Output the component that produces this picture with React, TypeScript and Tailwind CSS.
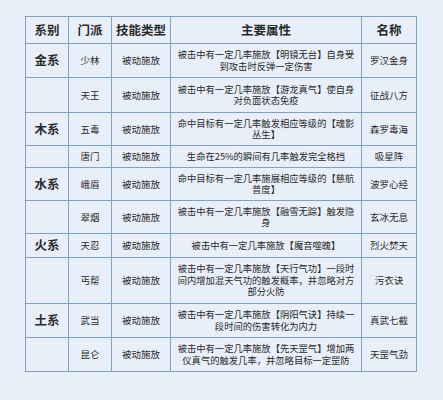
const rows = [
  { series: '金系', sect: '少林', attr: '被击中有一定几率施放【明镜无台】自身受到攻击时反弹一定伤害', name: '罗汉金身', h: 'h-[34px]' },
  { series: '', sect: '天王', attr: '被击中有一定几率施放【游龙真气】使自身对负面状态免疫', name: '征战八方', h: 'h-[35px]' },
  { series: '木系', sect: '五毒', attr: '命中目标有一定几率触发相应等级的【魂影丛生】', name: '森罗毒海', h: 'h-[33px]' },
  { series: '', sect: '唐门', attr: '生命在25%的瞬间有几率触发完全格挡', name: '吸星阵', h: 'h-[22px]' },
  { series: '水系', sect: '峨眉', attr: '命中目标有一定几率施展相应等级的【慈航普度】', name: '波罗心经', h: 'h-[33px]' },
  { series: '', sect: '翠烟', attr: '被击中有一定几率施放【融雪无踪】触发隐身', name: '玄冰无息', h: 'h-[33px]' },
  { series: '火系', sect: '天忍', attr: '被击中有一定几率施放【魔音噬魄】', name: '烈火焚天', h: 'h-[24px]' },
  { series: '', sect: '丐帮', attr: '被击中有一定几率施放【天行气功】一段时间内增加混天气功的触发概率，并忽略对方部分火防', name: '污衣诀', h: 'h-[46px]' },
  { series: '土系', sect: '武当', attr: '被击中有一定几率施放【阴阳气诀】持续一段时间的伤害转化为内力', name: '真武七截', h: 'h-[34px]' },
  { series: '', sect: '昆仑', attr: '被击中有一定几率施放【先天罡气】增加两仪真气的触发几率，并忽略目标一定罡防', name: '天罡气劲', h: 'h-[34px]' },
];

const cell = 'border border-[#7aa3c4] text-center align-middle';

export default function App() {
  return (
    <div className="w-[443px] h-[400px] bg-[#e8eff9] pt-[16px] pl-[25px] font-['Noto_Sans_CJK_SC',sans-serif] text-[#2a2a2a]">
      <table className="border-collapse table-fixed w-[391px]">
        <colgroup>
          <col className="w-[43px]" />
          <col className="w-[43px]" />
          <col className="w-[59px]" />
          <col className="w-[191px]" />
          <col className="w-[55px]" />
        </colgroup>
        <thead>
          <tr className="h-[27px] text-[12.5px] font-bold leading-none">
            <th className={cell}>系别</th>
            <th className={cell}>门派</th>
            <th className={cell}>技能类型</th>
            <th className={cell}>主要属性</th>
            <th className={cell}>名称</th>
          </tr>
        </thead>
        <tbody>
          {rows.map((r) => (
            <tr key={r.sect} className={r.h}>
              <td className={`${cell} text-[12.5px] font-bold`}>{r.series}</td>
              <td className={`${cell} text-[9.5px]`}>{r.sect}</td>
              <td className={`${cell} text-[9.5px]`}>被动施放</td>
              <td className={`${cell} text-[9.3px] leading-[11.5px] px-[5px]`}>{r.attr}</td>
              <td className={`${cell} text-[9.5px]`}>{r.name}</td>
            </tr>
          ))}
        </tbody>
      </table>
    </div>
  );
}
